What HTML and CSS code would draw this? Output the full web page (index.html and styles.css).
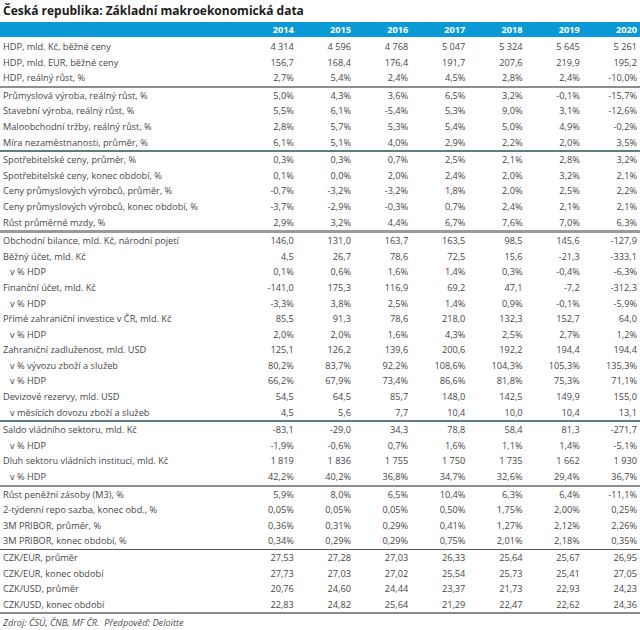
FILE: index.html
```html
<!DOCTYPE html>
<html lang="cs">
<head>
<meta charset="utf-8">
<title>Česká republika: Základní makroekonomická data</title>
<link rel="stylesheet" href="styles.css">
</head>
<body>
<div class="page">
  <h1 class="title">Česká republika: Základní makroekonomická data</h1>
  <table class="data">
    <colgroup>
      <col class="c-label"><col class="c-num"><col class="c-num"><col class="c-num"><col class="c-num"><col class="c-num"><col class="c-num"><col class="c-num">
    </colgroup>
    <thead>
      <tr><th class="lbl"></th><th>2014</th><th>2015</th><th>2016</th><th>2017</th><th>2018</th><th>2019</th><th>2020</th></tr>
    </thead>
    <tbody>
      <tr><td class="lbl">HDP, mld. Kč, běžné ceny</td><td>4&nbsp;314</td><td>4&nbsp;596</td><td>4&nbsp;768</td><td>5&nbsp;047</td><td>5&nbsp;324</td><td>5&nbsp;645</td><td>5&nbsp;261</td></tr>
      <tr><td class="lbl">HDP, mld. EUR, běžné ceny</td><td>156,7</td><td>168,4</td><td>176,4</td><td>191,7</td><td>207,6</td><td>219,9</td><td>195,2</td></tr>
      <tr class="sep-gray"><td class="lbl">HDP, reálný růst, %</td><td>2,7%</td><td>5,4%</td><td>2,4%</td><td>4,5%</td><td>2,8%</td><td>2,4%</td><td>-10,0%</td></tr>
      <tr><td class="lbl">Průmyslová výroba, reálný růst, %</td><td>5,0%</td><td>4,3%</td><td>3,6%</td><td>6,5%</td><td>3,2%</td><td>-0,1%</td><td>-15,7%</td></tr>
      <tr><td class="lbl">Stavební výroba, reálný růst, %</td><td>5,5%</td><td>6,1%</td><td>-5,4%</td><td>5,3%</td><td>9,0%</td><td>3,1%</td><td>-12,6%</td></tr>
      <tr><td class="lbl">Maloobchodní tržby, reálný růst, %</td><td>2,8%</td><td>5,7%</td><td>5,3%</td><td>5,4%</td><td>5,0%</td><td>4,9%</td><td>-0,2%</td></tr>
      <tr class="sep-slate"><td class="lbl">Míra nezaměstnanosti, průměr, %</td><td>6,1%</td><td>5,1%</td><td>4,0%</td><td>2,9%</td><td>2,2%</td><td>2,0%</td><td>3,5%</td></tr>
      <tr><td class="lbl">Spotřebitelské ceny, průměr, %</td><td>0,3%</td><td>0,3%</td><td>0,7%</td><td>2,5%</td><td>2,1%</td><td>2,8%</td><td>3,2%</td></tr>
      <tr><td class="lbl">Spotřebitelské ceny, konec období, %</td><td>0,1%</td><td>0,0%</td><td>2,0%</td><td>2,4%</td><td>2,0%</td><td>3,2%</td><td>2,1%</td></tr>
      <tr><td class="lbl">Ceny průmyslových výrobců, průměr, %</td><td>-0,7%</td><td>-3,2%</td><td>-3,2%</td><td>1,8%</td><td>2,0%</td><td>2,5%</td><td>2,2%</td></tr>
      <tr><td class="lbl">Ceny průmyslových výrobců, konec období, %</td><td>-3,7%</td><td>-2,9%</td><td>-0,3%</td><td>0,7%</td><td>2,4%</td><td>2,1%</td><td>2,1%</td></tr>
      <tr class="sep-thick"><td class="lbl">Růst průměrné mzdy, %</td><td>2,9%</td><td>3,2%</td><td>4,4%</td><td>6,7%</td><td>7,6%</td><td>7,0%</td><td>6,3%</td></tr>
      <tr><td class="lbl">Obchodní bilance, mld. Kč, národní pojetí</td><td>146,0</td><td>131,0</td><td>163,7</td><td>163,5</td><td>98,5</td><td>145,6</td><td>-127,9</td></tr>
      <tr><td class="lbl">Běžný účet, mld. Kč</td><td>4,5</td><td>26,7</td><td>78,6</td><td>72,5</td><td>15,6</td><td>-21,3</td><td>-333,1</td></tr>
      <tr><td class="lbl ind">v % HDP</td><td>0,1%</td><td>0,6%</td><td>1,6%</td><td>1,4%</td><td>0,3%</td><td>-0,4%</td><td>-6,3%</td></tr>
      <tr><td class="lbl">Finanční účet, mld. Kč</td><td>-141,0</td><td>175,3</td><td>116,9</td><td>69,2</td><td>47,1</td><td>-7,2</td><td>-312,3</td></tr>
      <tr><td class="lbl ind">v % HDP</td><td>-3,3%</td><td>3,8%</td><td>2,5%</td><td>1,4%</td><td>0,9%</td><td>-0,1%</td><td>-5,9%</td></tr>
      <tr><td class="lbl">Přímé zahraniční investice v ČR, mld. Kč</td><td>85,5</td><td>91,3</td><td>78,6</td><td>218,0</td><td>132,3</td><td>152,7</td><td>64,0</td></tr>
      <tr><td class="lbl ind">v % HDP</td><td>2,0%</td><td>2,0%</td><td>1,6%</td><td>4,3%</td><td>2,5%</td><td>2,7%</td><td>1,2%</td></tr>
      <tr><td class="lbl">Zahraniční zadluženost, mld. USD</td><td>125,1</td><td>126,2</td><td>139,6</td><td>200,6</td><td>192,2</td><td>194,4</td><td>194,4</td></tr>
      <tr><td class="lbl ind">v % vývozu zboží a služeb</td><td>80,2%</td><td>83,7%</td><td>92,2%</td><td>108,6%</td><td>104,3%</td><td>105,3%</td><td>135,3%</td></tr>
      <tr><td class="lbl ind">v % HDP</td><td>66,2%</td><td>67,9%</td><td>73,4%</td><td>86,6%</td><td>81,8%</td><td>75,3%</td><td>71,1%</td></tr>
      <tr><td class="lbl">Devizové rezervy, mld. USD</td><td>54,5</td><td>64,5</td><td>85,7</td><td>148,0</td><td>142,5</td><td>149,9</td><td>155,0</td></tr>
      <tr class="sep-slate"><td class="lbl ind">v měsících dovozu zboží a služeb</td><td>4,5</td><td>5,6</td><td>7,7</td><td>10,4</td><td>10,0</td><td>10,4</td><td>13,1</td></tr>
      <tr><td class="lbl">Saldo vládního sektoru, mld. Kč</td><td>-83,1</td><td>-29,0</td><td>34,3</td><td>78,8</td><td>58,4</td><td>81,3</td><td>-271,7</td></tr>
      <tr><td class="lbl ind">v % HDP</td><td>-1,9%</td><td>-0,6%</td><td>0,7%</td><td>1,6%</td><td>1,1%</td><td>1,4%</td><td>-5,1%</td></tr>
      <tr><td class="lbl">Dluh sektoru vládních institucí, mld. Kč</td><td>1&nbsp;819</td><td>1&nbsp;836</td><td>1&nbsp;755</td><td>1&nbsp;750</td><td>1&nbsp;735</td><td>1&nbsp;662</td><td>1&nbsp;930</td></tr>
      <tr class="sep-gray"><td class="lbl ind">v % HDP</td><td>42,2%</td><td>40,2%</td><td>36,8%</td><td>34,7%</td><td>32,6%</td><td>29,4%</td><td>36,7%</td></tr>
      <tr><td class="lbl">Růst peněžní zásoby (M3), %</td><td>5,9%</td><td>8,0%</td><td>6,5%</td><td>10,4%</td><td>6,3%</td><td>6,4%</td><td>-11,1%</td></tr>
      <tr><td class="lbl">2-týdenní repo sazba, konec obd., %</td><td>0,05%</td><td>0,05%</td><td>0,05%</td><td>0,50%</td><td>1,75%</td><td>2,00%</td><td>0,25%</td></tr>
      <tr><td class="lbl">3M PRIBOR, průměr, %</td><td>0,36%</td><td>0,31%</td><td>0,29%</td><td>0,41%</td><td>1,27%</td><td>2,12%</td><td>2,26%</td></tr>
      <tr class="sep-dark"><td class="lbl">3M PRIBOR, konec období, %</td><td>0,34%</td><td>0,29%</td><td>0,29%</td><td>0,75%</td><td>2,01%</td><td>2,18%</td><td>0,35%</td></tr>
      <tr><td class="lbl">CZK/EUR, průměr</td><td>27,53</td><td>27,28</td><td>27,03</td><td>26,33</td><td>25,64</td><td>25,67</td><td>26,95</td></tr>
      <tr><td class="lbl">CZK/EUR, konec období</td><td>27,73</td><td>27,03</td><td>27,02</td><td>25,54</td><td>25,73</td><td>25,41</td><td>27,05</td></tr>
      <tr><td class="lbl">CZK/USD, průměr</td><td>20,76</td><td>24,60</td><td>24,44</td><td>23,37</td><td>21,73</td><td>22,93</td><td>24,23</td></tr>
      <tr class="sep-end"><td class="lbl">CZK/USD, konec období</td><td>22,83</td><td>24,82</td><td>25,64</td><td>21,29</td><td>22,47</td><td>22,62</td><td>24,36</td></tr>
    </tbody>
  </table>
  <p class="source">Zdroj: ČSÚ, ČNB, MF ČR.&nbsp; Předpověď: Deloitte</p>
</div>
</body>
</html>
```
FILE: styles.css
```css
html, body {
  margin: 0;
  padding: 0;
  background: #ffffff;
}

.page {
  width: 640px;
  font-family: "Open Sans", "Noto Sans", sans-serif;
  color: #474747;
}

.title {
  margin: 0;
  height: 22px;
  line-height: 22px;
  padding-left: 3px;
  font-size: 12px;
  font-weight: 700;
  color: #1c1c1c;
  white-space: nowrap;
}

.data {
  width: 640px;
  table-layout: fixed;
  border-collapse: separate;
  border-spacing: 0;
  font-size: 9.2px;
}

.c-label { width: 239.6px; }
.c-num { width: 57.2px; }

.data th,
.data td {
  padding: 0 3px 0 0;
  text-align: right;
  white-space: nowrap;
  overflow: hidden;
}

.data th {
  height: 15px;
  line-height: 15px;
  background: #0a9ad8;
  color: #ffffff;
  font-weight: 700;
  border-bottom: 2px solid #ffffff;
}

.data td {
  height: 15.6px;
  line-height: 15.6px;
}

.data .lbl {
  text-align: left;
  padding: 0 0 0 3px;
}

.data .ind {
  padding-left: 10px;
}

.sep-gray td { border-bottom: 2px solid #8e8e8e; }
.sep-slate td { border-bottom: 2px solid #5f7d85; }
.sep-thick td { border-bottom: 3px solid #9a9a9a; }
.sep-dark td { border-bottom: 1px solid #555555; }
.sep-end td { border-bottom: 2px solid #8a8a8a; }

.source {
  margin: 0;
  padding: 1px 0 0 3px;
  height: 15px;
  line-height: 15px;
  font-size: 9.2px;
  font-style: italic;
  color: #4f4f4f;
}
```
